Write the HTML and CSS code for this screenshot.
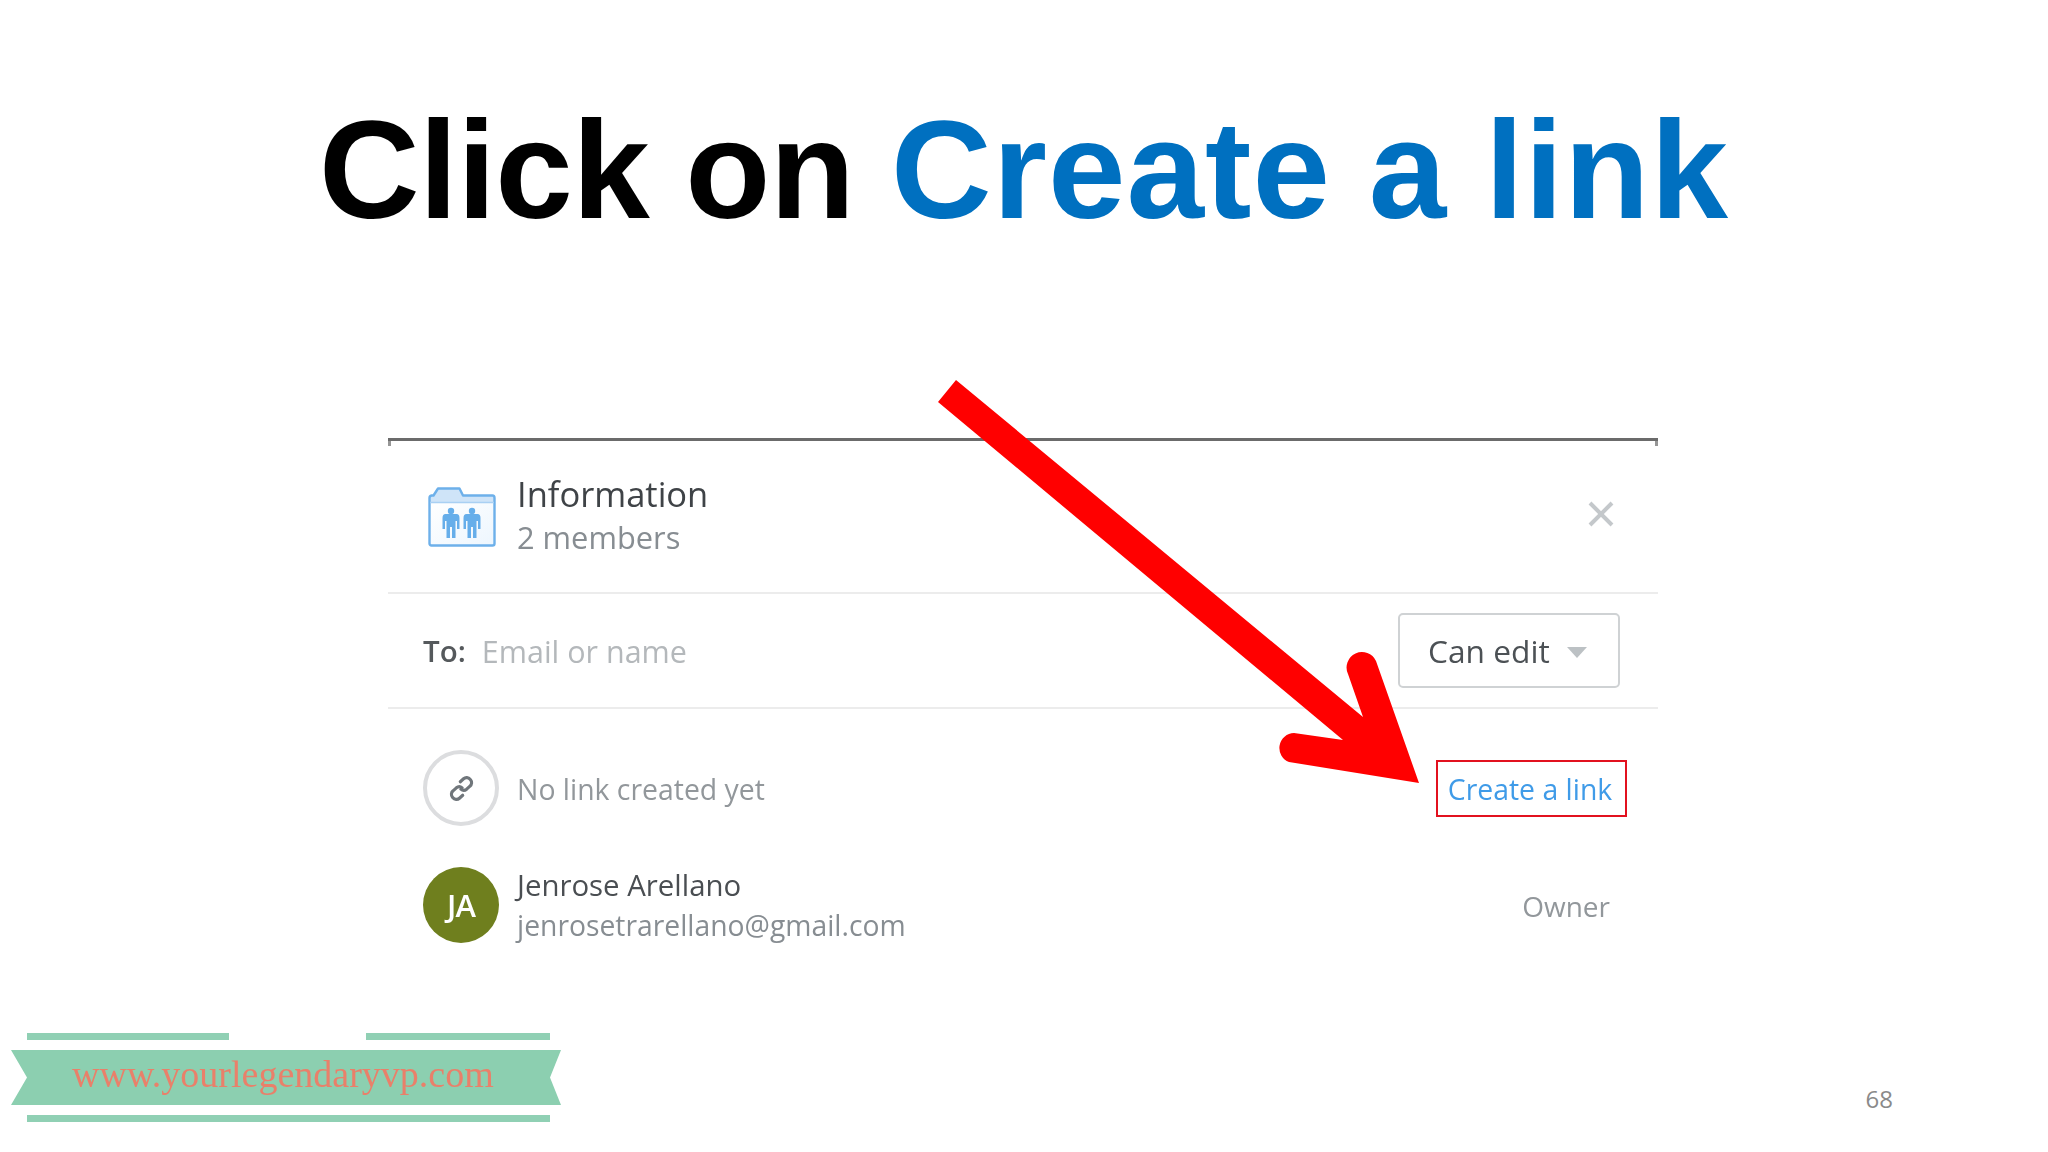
FILE: index.html
```html
<!DOCTYPE html>
<html lang="en">
<head>
<meta charset="utf-8">
<title>Click on Create a link</title>
<link rel="stylesheet" href="styles.css">
</head>
<body>
<main class="slide">
  <h1 class="title"><span class="title-lead">Click on</span> <span class="title-accent">Create a link</span></h1>

  <section class="panel">
    <header class="panel-head">
      <svg class="folder" viewBox="0 0 68 60" aria-hidden="true">
        <defs>
          <linearGradient id="folderFill" x1="0" y1="0" x2="1" y2="1">
            <stop offset="0" stop-color="#ffffff"/>
            <stop offset="1" stop-color="#edf6fe"/>
          </linearGradient>
        </defs>
        <path class="folder-tab" d="M1.500 15V11q0-2 2-2.500h2L10 1.500h21.500L35 8.500h29.500q2 0 2 2.500v4z"/>
        <rect class="folder-body" x="1.500" y="15" width="65" height="43.500" rx="2" fill="url(#folderFill)"/>
        <path class="folder-outline" d="M1.500 15V11q0-2 2-2.500h2L10 1.500h21.500L35 8.500h29.500q2 0 2 2.500v4V56.500q0 2-2 2h-61q-2 0-2-2z"/>
        <path class="folder-rule" d="M2 15.500h64"/>
        <g class="folder-people">
          <circle cx="23" cy="24" r="3.200"/>
          <path d="M14.500 31q0-4 3-4h11q3 0 3 4v11h-2.500v-8h-1.500v17h-3.500V40h-2v11h-3.500V34H17v8h-2.500z"/>
          <circle cx="44" cy="24" r="3.200"/>
          <path d="M35.500 31q0-4 3-4h11q3 0 3 4v11H50v-8h-1.500v17H45V40h-2v11h-3.500V34H38v8h-2.500z"/>
        </g>
      </svg>
      <div class="head-text">
        <div class="head-title">Information</div>
        <div class="head-sub">2 members</div>
      </div>
      <svg class="close" viewBox="0 0 26 26" aria-hidden="true"><path d="M2 2l22 22M24 2L2 24"/></svg>
    </header>

    <div class="to-row">
      <span class="to-label">To:</span>
      <span class="to-placeholder">Email or name</span>
      <div class="select">Can edit<span class="caret"></span></div>
    </div>

    <div class="rows">
      <div class="row">
        <div class="link-circle">
          <svg class="link-icon" viewBox="0 0 24 24" aria-hidden="true">
            <path d="M10.500 6.500l2.500-2.700a3.700 3.700 0 0 1 5.400 0l.4.400a3.700 3.700 0 0 1 0 5.300l-2.500 2.700a3.700 3.700 0 0 1-4.800.4"/>
            <path d="M13.500 17.500l-2.500 2.700a3.700 3.700 0 0 1-5.400 0l-.4-.4a3.700 3.700 0 0 1 0-5.300l2.500-2.700a3.700 3.700 0 0 1 4.800-.4"/>
          </svg>
        </div>
        <div class="row-text muted">No link created yet</div>
        <div class="create-box"><a class="create-link">Create a link</a></div>
      </div>
      <div class="row">
        <div class="avatar">JA</div>
        <div class="person">
          <div class="person-name">Jenrose Arellano</div>
          <div class="person-mail">jenrosetrarellano@gmail.com</div>
        </div>
        <div class="role">Owner</div>
      </div>
    </div>
  </section>

  <footer class="foot">
    <div class="ribbon">
      <div class="bars bars-top"><span class="bar bar-a"></span><span class="bar bar-b"></span></div>
      <div class="banner">www.yourlegendaryvp.com</div>
      <div class="bars"><span class="bar bar-full"></span></div>
    </div>
    <div class="page-num">68</div>
  </footer>

  <svg class="arrow" viewBox="0 0 2048 1152" aria-hidden="true">
    <path d="M956 380L1363 717L1348 674A15 15 0 0 1 1376 661L1419 783L1289 762A15 15 0 0 1 1294 733L1343 740L938 402Z"/>
  </svg>
</main>
</body>
</html>
```

FILE: styles.css
```css
* { box-sizing: border-box; }
html, body { margin: 0; padding: 0; background: #fff; }
.slide {
  position: relative;
  width: 2048px;
  height: 1152px;
  overflow: hidden;
  display: flex;
  flex-direction: column;
  font-family: "Open Sans", "Noto Sans", sans-serif;
}
.title {
  margin: 0;
  padding-top: 85px;
  height: 438px;
  text-align: center;
  font-family: "Liberation Sans", Arial, sans-serif;
  font-weight: 700;
  font-size: 139.400px;
  line-height: 170px;
  color: #000;
  white-space: nowrap;
  word-spacing: -2px;
}
.title-lead { letter-spacing: -0.600px; }
.title-accent { color: #0070c0; letter-spacing: 1px; }

.panel {
  position: relative;
  width: 1270px;
  margin-left: 388px;
  border-top: 3px solid #6b6b6b;
  filter: blur(0.6px);
}
.panel::before,
.panel::after {
  content: "";
  position: absolute;
  top: 0;
  width: 3px;
  height: 5px;
  background: #969696;
}
.panel::before { left: 0; }
.panel::after { right: 0; }
.panel-head {
  display: flex;
  align-items: center;
  height: 153px;
  padding: 0 44px 0 40px;
  border-bottom: 2px solid #ececec;
}
.folder { width: 68px; height: 60px; margin-right: 21px; flex: none; }
.folder-tab { fill: #cfe4f8; }
.folder-outline { fill: none; stroke: #6db0ea; stroke-width: 2.400; stroke-linejoin: round; }
.folder-rule { fill: none; stroke: #a9d0f3; stroke-width: 1.500; }
.folder-people { fill: #66aeea; }
.head-text { flex: 1; margin-top: -3px; }
.head-title { font-size: 34.500px; line-height: 44px; font-weight: 500; color: #3f4347; }
.head-sub { font-size: 30.800px; line-height: 42px; color: #878d92; }
.close { width: 26px; height: 26px; margin-top: -5px; fill: none; stroke: #c4c8cb; stroke-width: 4; }

.to-row {
  display: flex;
  align-items: center;
  height: 115px;
  padding: 0 38px 0 35px;
  border-bottom: 2px solid #ececec;
}
.to-label { font-size: 29.500px; font-weight: 600; color: #55595c; margin-right: 16px; }
.to-placeholder { flex: 1; font-size: 30.500px; color: #b4b8bb; }
.select {
  display: flex;
  align-items: center;
  justify-content: space-between;
  width: 222px;
  height: 75px;
  padding: 0 31px 0 28px;
  border: 2px solid #cfd2d4;
  border-radius: 5px;
  font-size: 31.700px;
  color: #4c5155;
}
.caret {
  width: 0;
  height: 0;
  margin-top: 4px;
  border-left: 10px solid transparent;
  border-right: 10px solid transparent;
  border-top: 11px solid #bcc1c4;
}

.rows {
  display: flex;
  flex-direction: column;
  gap: 41px;
  padding: 41px 48px 0 35px;
}
.row { display: flex; align-items: center; height: 76px; }
.link-circle, .avatar {
  flex: none;
  width: 76px;
  height: 76px;
  margin-right: 18px;
  border-radius: 50%;
  display: flex;
  align-items: center;
  justify-content: center;
}
.link-circle { border: 4px solid #dcdddf; }
.link-icon {
  width: 29px;
  height: 29px;
  fill: none;
  stroke: #70767b;
  stroke-width: 2.600;
  stroke-linecap: round;
  transform: rotate(5deg);
}
.avatar { background: #6f7f1e; color: #fff; font-size: 31px; font-weight: 600; letter-spacing: -1px; }
.row-text { flex: 1; font-size: 28.400px; padding-top: 2px; }
.muted { color: #92979b; }
.create-box {
  position: relative;
  left: 17px;
  height: 57px;
  width: 191px;
  margin-left: -10px;
  display: flex;
  align-items: center;
  justify-content: center;
  padding-top: 2px;
  border: 2px solid #e2111f;
}
.create-link { font-size: 28.400px; color: #3f9be8; margin-right: 3px; }
.person { flex: 1; }
.person-name { font-size: 29.400px; line-height: 40px; color: #4a4e52; margin-top: 1px; }
.person-mail { font-size: 28.300px; line-height: 41px; color: #878d92; }
.role { font-size: 28px; color: #92979b; padding-top: 2px; }

.foot {
  margin-top: auto;
  display: flex;
  justify-content: space-between;
  padding: 0 155px 30px 11px;
  align-items: flex-end;
}
.ribbon { width: 550px; display: flex; flex-direction: column; }
.bars { display: flex; justify-content: space-between; padding: 0 11px 0 16px; height: 7px; }
.bars-top { margin-bottom: 10px; }
.bar { display: block; height: 7px; background: #90d0b4; }
.bar-a { width: 202px; }
.bar-b { width: 184px; }
.bar-full { width: 523px; }
.banner {
  height: 55px;
  margin-bottom: 10px;
  padding-left: 61px;
  background: #8ccfb0;
  clip-path: polygon(0 0, 100% 0, 539px 50%, 100% 100%, 0 100%, 16px 50%);
  font-family: "Liberation Serif", "Times New Roman", serif;
  font-size: 38px;
  line-height: 48px;
  color: #e9806a;
  white-space: nowrap;
  filter: blur(0.4px);
}
.page-num { font-size: 24px; line-height: 30px; color: #8a8a8a; padding-bottom: 8px; }

.arrow {
  position: absolute;
  left: 0;
  top: 0;
  width: 2048px;
  height: 1152px;
  fill: #ff0000;
  pointer-events: none;
}
```
